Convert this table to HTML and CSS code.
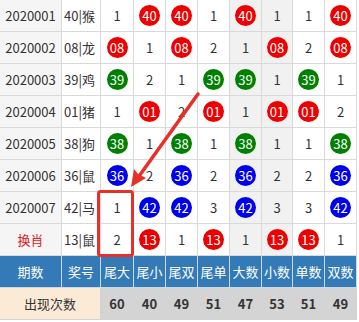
FILE: index.html
```html
<!DOCTYPE html>
<html lang="zh">
<head>
<meta charset="utf-8">
<link rel="stylesheet" href="styles.css">
</head>
<body>
<div class="wrap">
<table class="grid">
<colgroup>
<col class="w-qi"><col class="w-jh"><col class="w-33"><col class="w-32"><col class="w-32"><col class="w-32"><col class="w-32"><col class="w-31"><col class="w-32"><col class="w-32">
</colgroup>
<tbody>
<tr><td class="qi">2020001</td><td class="jh">40|猴</td><td>1</td><td><span class="ball red">40</span></td><td><span class="ball red">40</span></td><td>1</td><td class="gr"><span class="ball red">40</span></td><td class="gr">1</td><td>1</td><td><span class="ball red">40</span></td></tr>
<tr><td class="qi">2020002</td><td class="jh">08|龙</td><td><span class="ball red">08</span></td><td>1</td><td><span class="ball red">08</span></td><td>2</td><td class="gr">1</td><td class="gr"><span class="ball red">08</span></td><td>2</td><td><span class="ball red">08</span></td></tr>
<tr><td class="qi">2020003</td><td class="jh">39|鸡</td><td><span class="ball green">39</span></td><td>2</td><td>1</td><td><span class="ball green">39</span></td><td class="gr"><span class="ball green">39</span></td><td class="gr">1</td><td><span class="ball green">39</span></td><td>1</td></tr>
<tr><td class="qi">2020004</td><td class="jh">01|猪</td><td>1</td><td><span class="ball red">01</span></td><td>2</td><td><span class="ball red">01</span></td><td class="gr">1</td><td class="gr"><span class="ball red">01</span></td><td><span class="ball red">01</span></td><td>2</td></tr>
<tr><td class="qi">2020005</td><td class="jh">38|狗</td><td><span class="ball green">38</span></td><td>1</td><td><span class="ball green">38</span></td><td>1</td><td class="gr"><span class="ball green">38</span></td><td class="gr">1</td><td>1</td><td><span class="ball green">38</span></td></tr>
<tr><td class="qi">2020006</td><td class="jh">36|鼠</td><td><span class="ball blue">36</span></td><td>2</td><td><span class="ball blue">36</span></td><td>2</td><td class="gr"><span class="ball blue">36</span></td><td class="gr">2</td><td>2</td><td><span class="ball blue">36</span></td></tr>
<tr><td class="qi">2020007</td><td class="jh">42|马</td><td>1</td><td><span class="ball blue">42</span></td><td><span class="ball blue">42</span></td><td>3</td><td class="gr"><span class="ball blue">42</span></td><td class="gr">3</td><td>3</td><td><span class="ball blue">42</span></td></tr>
<tr><td class="qi hx">换肖</td><td class="jh">13|鼠</td><td>2</td><td><span class="ball red">13</span></td><td>1</td><td><span class="ball red">13</span></td><td class="gr">1</td><td class="gr"><span class="ball red">13</span></td><td><span class="ball red">13</span></td><td>1</td></tr>
<tr class="head"><th>期数</th><th>奖号</th><th>尾大</th><th>尾小</th><th>尾双</th><th>尾单</th><th>大数</th><th>小数</th><th>单数</th><th>双数</th></tr>
<tr class="count"><td colspan="2" class="count-label">出现次数</td><td>60</td><td>40</td><td>49</td><td>51</td><td>47</td><td>53</td><td>51</td><td>49</td></tr>
</tbody>
</table>
<svg class="mark" width="359" height="322" viewBox="0 0 359 322">
<rect x="98.5" y="191.5" width="34" height="64" rx="2" fill="none" stroke="#e8302a" stroke-width="3"/>
<line x1="198" y1="94" x2="137" y2="179" stroke="#e8302a" stroke-width="3.5" stroke-linecap="round"/>
<polygon points="131,187 134,169 138,174 146,178" fill="#e8302a"/>
</svg>
</div>
</body>
</html>
```
FILE: styles.css
```css
html, body {
  margin: 0;
  padding: 0;
  background: #fff;
}
.wrap {
  position: relative;
  width: 359px;
  height: 322px;
  overflow: hidden;
}
.grid {
  border-collapse: collapse;
  table-layout: fixed;
  width: 357px;
  margin: -1px 0 0 -1px;
  font-family: "Noto Sans CJK SC", "Noto Sans", sans-serif;
  font-size: 13px;
  color: #333;
}
.w-qi { width: 62px; }
.w-jh { width: 39px; }
.w-33 { width: 33px; }
.w-32 { width: 32px; }
.w-31 { width: 31px; }
.grid td, .grid th {
  border: 1px solid #d9d9d9;
  height: 31px;
  padding: 0;
  text-align: center;
  vertical-align: middle;
  line-height: 1;
  white-space: nowrap;
  overflow: hidden;
}
.grid td.qi {
  background: #f5f5f5;
}
.grid td.jh {
  text-align: left;
  padding-left: 2px;
}
.grid td.gr {
  background: #f1f1f1;
}
.grid td.hx {
  color: #e0201b;
}
.ball {
  display: inline-block;
  width: 21px;
  height: 21px;
  border-radius: 50%;
  color: #fff;
  line-height: 21px;
  font-size: 13px;
  text-align: center;
  vertical-align: middle;
}
.ball.red { background: #ee0000; }
.ball.green { background: #008000; }
.ball.blue { background: #0000ee; }
.head th {
  background: #337ab7;
  color: #fff;
  font-weight: normal;
  border-color: #c9d9ea;
  border-top-color: #d9d9d9;
}
.count td {
  background: #d4d4d4;
  font-weight: bold;
  border-color: #d4d4d4;
}
.count td.count-label {
  background: #fbebd6;
  font-weight: normal;
}
.mark {
  position: absolute;
  left: 0;
  top: 0;
  pointer-events: none;
}
```
